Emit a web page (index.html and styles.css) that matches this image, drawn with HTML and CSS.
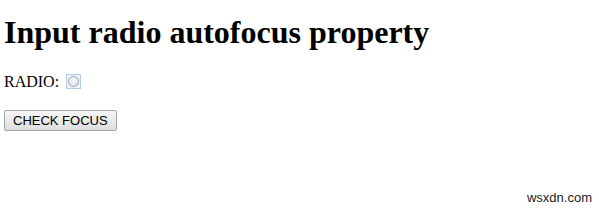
FILE: index.html
```html
<!DOCTYPE html>
<html lang="en">
<head>
<meta charset="UTF-8" />
<title>Input radio autofocus property</title>
<link rel="stylesheet" href="styles.css">
</head>
<body>

<h1>Input radio autofocus property</h1>

<p class="row">RADIO: <input type="radio" id="rad" class="radio" autofocus></p>

<button class="checkBtn" onclick="checkFocus()">CHECK FOCUS</button>

<p id="sample"></p>

<span class="mark">wsxdn.com</span>

<script>
  function checkFocus() {
    var f = document.getElementById('rad').autofocus;
    document.getElementById('sample').textContent = 'The radio button autofocus property is set to: ' + f;
  }
</script>

</body>
</html>
```

FILE: styles.css
```css
body {
  font-family: "Liberation Serif", "Times New Roman", serif;
  font-size: 16px;
  margin: 0;
  padding: 0 4px;
  background: white;
  color: black;
}
h1 {
  font-size: 32px;
  font-weight: bold;
  margin: 14px 0 0 0;
  line-height: 37px;
}
p.row {
  margin: 22px 0 0 0;
}
/* focused radio box */
.radio {
  appearance: none;
  -webkit-appearance: none;
  display: inline-block;
  vertical-align: -2px;
  margin: 0 0 0 3px;
  width: 15px;
  height: 15px;
  box-sizing: border-box;
  border: 1px solid #b7cbe6;
  background: #eef3fa;
  position: relative;
}
.radio::after {
  content: "";
  position: absolute;
  left: 1px; top: 1px;
  width: 11px; height: 11px;
  box-sizing: border-box;
  border-radius: 50%;
  border: 1px solid #9aa3ad;
  background: radial-gradient(circle at 50% 40%, #f8f8f8, #d8dde2);
}
.radio:focus { outline: none; }
button.checkBtn {
  display: block;
  margin-top: 19px;
  font-family: "Liberation Sans", Arial, sans-serif;
  font-size: 13px;
  color: black;
  height: 21px;
  box-sizing: border-box;
  padding: 0 8px;
  border: 1px solid #a6a6a6;
  border-radius: 2px;
  background: linear-gradient(#f6f6f6, #dedede);
}
#sample { margin: 0; }
.mark {
  position: absolute;
  right: 7px;
  bottom: 4px;
  font-family: "Liberation Sans", Arial, sans-serif;
  font-size: 13px;
  color: #222;
}
```
